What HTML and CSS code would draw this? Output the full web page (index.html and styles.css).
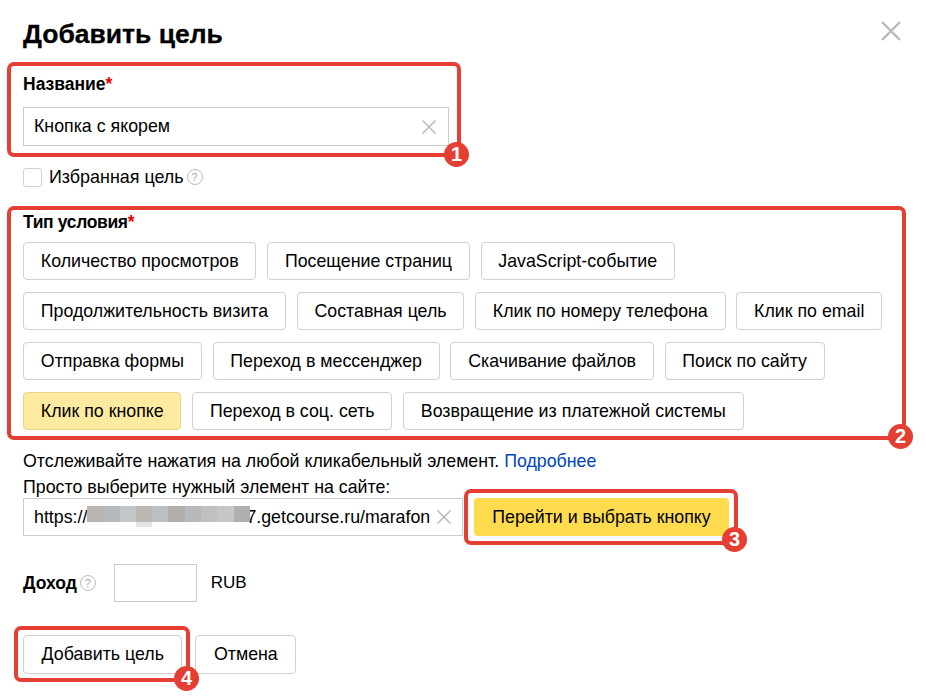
FILE: index.html
```html
<!DOCTYPE html>
<html lang="en">

<head>
    <meta charset="UTF-8" />
    <title>Добавить цель</title>
    <link rel="stylesheet" href="styles.css">
</head>

<body>
    <div class="dialog">
        <svg class="close-icon" width="20" height="20" viewBox="0 0 20 20">
            <path d="M1 1L19 19M19 1L1 19" stroke="#b8b8b8" stroke-width="2.4" fill="none" />
        </svg>

        <h1 class="title">Добавить цель</h1>

        <div class="field-label name-label">Название<span class="required">*</span></div>
        <div class="text-input name-input">
            <span class="input-value">Кнопка с якорем</span>
            <svg class="clear-icon" width="14" height="14" viewBox="0 0 14 14">
                <path d="M0.5 0.5L13.5 13.5M13.5 0.5L0.5 13.5" stroke="#b3b3b3" stroke-width="1.3" fill="none" />
            </svg>
        </div>

        <div class="favorite-row">
            <span class="checkbox"></span>
            <span class="favorite-text">Избранная цель</span>
            <span class="hint">?</span>
        </div>

        <div class="field-label type-label">Тип условия<span class="required">*</span></div>
        <div class="type-list">
            <div class="type-row">
                <button class="btn">Количество просмотров</button>
                <button class="btn">Посещение страниц</button>
                <button class="btn">JavaScript-событие</button>
            </div>
            <div class="type-row">
                <button class="btn">Продолжительность визита</button>
                <button class="btn">Составная цель</button>
                <button class="btn">Клик по номеру телефона</button>
                <button class="btn">Клик по email</button>
            </div>
            <div class="type-row">
                <button class="btn">Отправка формы</button>
                <button class="btn">Переход в мессенджер</button>
                <button class="btn">Скачивание файлов</button>
                <button class="btn">Поиск по сайту</button>
            </div>
            <div class="type-row">
                <button class="btn btn-selected">Клик по кнопке</button>
                <button class="btn">Переход в соц. сеть</button>
                <button class="btn">Возвращение из платежной системы</button>
            </div>
        </div>

        <p class="note">Отслеживайте нажатия на любой кликабельный элемент. <a href="#">Подробнее</a></p>
        <p class="note note-second">Просто выберите нужный элемент на сайте:</p>

        <div class="url-row">
            <div class="text-input url-input">
                <span class="input-value">https://<span class="mosaic-gap"></span>7.getcourse.ru/marafon</span>
                <div class="mosaic"><i></i><i></i><i></i><i></i><i></i><i></i><i></i><i></i><i></i><i></i></div>
                <svg class="clear-icon" width="14" height="14" viewBox="0 0 14 14">
                    <path d="M0.5 0.5L13.5 13.5M13.5 0.5L0.5 13.5" stroke="#b3b3b3" stroke-width="1.3" fill="none" />
                </svg>
            </div>
            <button class="btn btn-yellow">Перейти и выбрать кнопку</button>
        </div>

        <div class="income-row">
            <span class="field-label">Доход</span>
            <span class="hint">?</span>
            <div class="text-input income-input"></div>
            <span class="currency">RUB</span>
        </div>

        <div class="actions">
            <button class="btn">Добавить цель</button>
            <button class="btn">Отмена</button>
        </div>
    </div>

    <!-- red marks drawn over the screenshot -->
    <div class="mark mark-1"><span class="mark-num">1</span></div>
    <div class="mark mark-2"><span class="mark-num">2</span></div>
    <div class="mark mark-3"><span class="mark-num">3</span></div>
    <div class="mark mark-4"><span class="mark-num">4</span></div>
</body>

</html>
```
FILE: styles.css
```css
html,
body {
    margin: 0;
    height: 697px;
    overflow: hidden;
    background-color: #fff;
}

body {
    font-family: 'Liberation Sans', Arial, sans-serif;
    color: #000;
    position: relative;
}

.dialog {
    padding: 18px 0 0 23px;
}

.close-icon {
    position: absolute;
    left: 881px;
    top: 21px;
}

.title {
    margin: 0;
    font-size: 26.5px;
    line-height: 32px;
    font-weight: bold;
    -webkit-text-stroke: 0.3px #000;
}

.field-label {
    font-size: 17.5px;
    line-height: 20px;
    font-weight: bold;
}

.name-label {
    margin-top: 24px;
}

.required {
    color: #e00;
}

.text-input {
    display: flex;
    align-items: center;
    justify-content: space-between;
    box-sizing: border-box;
    border: 1px solid #ccc;
    background: #fff;
    font-size: 17.8px;
}

.input-value {
    white-space: nowrap;
}

.name-input {
    width: 426px;
    height: 39px;
    margin-top: 13px;
    padding: 0 12px 0 10px;
}

.favorite-row {
    display: flex;
    align-items: center;
    margin-top: 22px;
    height: 18px;
}

.checkbox {
    box-sizing: border-box;
    width: 19px;
    height: 19px;
    border: 1px solid #d0d0d0;
    border-radius: 3px;
}

.favorite-text {
    margin-left: 7px;
    font-size: 17.9px;
}

.hint {
    box-sizing: border-box;
    width: 16px;
    height: 16px;
    margin-left: 3px;
    border: 1px solid #bbb;
    border-radius: 50%;
    color: #aaa;
    font-size: 11px;
    line-height: 14px;
    text-align: center;
}

.type-label {
    margin-top: 26px;
    letter-spacing: -0.35px;
}

.type-list {
    margin-top: 10px;
}

.type-row {
    display: flex;
    gap: 10.7px;
    margin-bottom: 12px;
}

.btn {
    box-sizing: border-box;
    height: 38px;
    padding: 0 16.8px;
    border: 1px solid #d0d0d0;
    border-radius: 4px;
    background: #fff;
    color: #000;
    font-family: inherit;
    font-size: 17.8px;
    white-space: nowrap;
}

.btn-selected {
    background: #ffeba0;
    border-color: #e6d48c;
}

.btn-yellow {
    width: 255px;
    border: none;
    background: #ffdb4d;
    padding: 0;
}

.note {
    margin: 0;
    font-size: 17.8px;
    line-height: 22px;
}

.type-list + .note {
    margin-top: 20px;
}

.note-second {
    margin-top: 4px;
}

.note a {
    color: #04b;
    text-decoration: none;
}

.url-row {
    display: flex;
    gap: 11px;
}

.url-input {
    position: relative;
    width: 440px;
    height: 38px;
    padding: 0 11px 0 10px;
}

.mosaic-gap {
    display: inline-block;
    width: 159px;
}

/* blurred part of the address */
.mosaic {
    position: absolute;
    left: 63px;
    top: 7px;
    display: flex;
    width: 163px;
}

.mosaic i {
    flex: 1;
    height: 16px;
}

.mosaic i:nth-child(1) { background: #b9b4b0; }
.mosaic i:nth-child(2) { background: #b4babd; }
.mosaic i:nth-child(3) { background: #c3c6c6; }
.mosaic i:nth-child(5) { background: #bbbfc1; }
.mosaic i:nth-child(6) { background: #b2aeaa; }
.mosaic i:nth-child(7) { background: #b7b9bb; }
.mosaic i:nth-child(8) { background: #bec0c1; }
.mosaic i:nth-child(9) { background: #c5c7c5; }
.mosaic i:nth-child(10) { background: #aeafb0; }

.mosaic i:nth-child(4) {
    height: 21px;
    background: linear-gradient(#bdb8b4 16px, #e4e4e4 16px);
}

.income-row {
    display: flex;
    align-items: center;
    margin-top: 28px;
}

.income-row .hint {
    margin-right: 18px;
}

.income-input {
    width: 83px;
    height: 38px;
}

.currency {
    margin-left: 14px;
    font-size: 17px;
}

.actions {
    display: flex;
    gap: 13px;
    margin-top: 33px;
}

.actions .btn {
    height: 39px;
    padding: 0 17.5px;
}

.mark {
    position: absolute;
    box-sizing: border-box;
    border: 4px solid #e53f33;
    border-radius: 7px;
}

.mark-1 {
    left: 7px;
    top: 62px;
    width: 454px;
    height: 95px;
}

.mark-2 {
    left: 7px;
    top: 206px;
    width: 899px;
    height: 234px;
}

.mark-3 {
    left: 464px;
    top: 489px;
    width: 274px;
    height: 56px;
}

.mark-4 {
    left: 14px;
    top: 626px;
    width: 176px;
    height: 56px;
}

.mark-num {
    position: absolute;
    width: 25px;
    height: 25px;
    border-radius: 50%;
    background: #e53f33;
    color: #fff;
    font-size: 20px;
    font-weight: bold;
    line-height: 25px;
    text-align: center;
}

.mark-1 .mark-num {
    right: -12px;
    bottom: -14px;
}

.mark-2 .mark-num {
    right: -11px;
    bottom: -13px;
}

.mark-3 .mark-num {
    right: -13px;
    bottom: -11px;
}

.mark-4 .mark-num {
    right: -13px;
    bottom: -13px;
}
```
